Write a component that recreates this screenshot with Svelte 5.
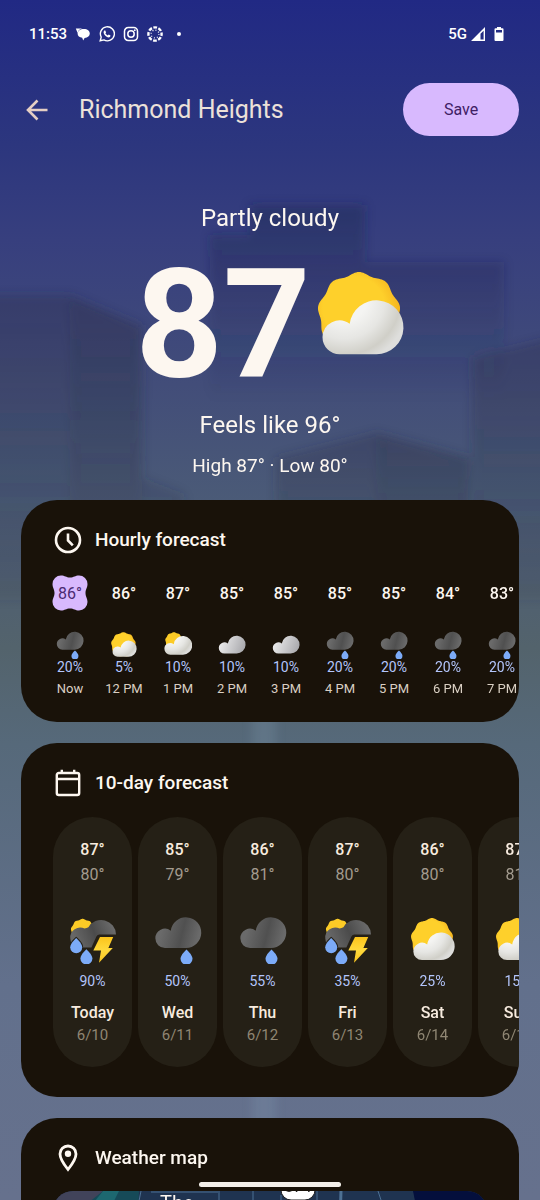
<script lang="ts">
  type Hour = { temp: number; icon: string; rain: number; label: string };
  type Day = { high: number; low: number; icon: string; rain: number; name: string; date: string };

  const hours: Hour[] = [
    { temp: 86, icon: 'rain', rain: 20, label: 'Now' },
    { temp: 86, icon: 'partly', rain: 5, label: '12 PM' },
    { temp: 87, icon: 'mostly', rain: 10, label: '1 PM' },
    { temp: 85, icon: 'cloudy', rain: 10, label: '2 PM' },
    { temp: 85, icon: 'cloudy', rain: 10, label: '3 PM' },
    { temp: 85, icon: 'rain', rain: 20, label: '4 PM' },
    { temp: 85, icon: 'rain', rain: 20, label: '5 PM' },
    { temp: 84, icon: 'rain', rain: 20, label: '6 PM' },
    { temp: 83, icon: 'rain', rain: 20, label: '7 PM' }
  ];

  const days: Day[] = [
    { high: 87, low: 80, icon: 'storm', rain: 90, name: 'Today', date: '6/10' },
    { high: 85, low: 79, icon: 'rain', rain: 50, name: 'Wed', date: '6/11' },
    { high: 86, low: 81, icon: 'rain', rain: 55, name: 'Thu', date: '6/12' },
    { high: 87, low: 80, icon: 'storm', rain: 35, name: 'Fri', date: '6/13' },
    { high: 86, low: 80, icon: 'partly', rain: 25, name: 'Sat', date: '6/14' },
    { high: 87, low: 81, icon: 'partly', rain: 15, name: 'Sun', date: '6/15' }
  ];

  // Scalloped sun outline with nine lobes, one pointing up
  function sunPath(cx: number, cy: number, r: number): string {
    const points: string[] = [];
    for (let i = 0; i < 180; i++) {
      const a = (i / 180) * Math.PI * 2;
      const d = r * (0.965 + 0.035 * Math.cos(9 * a));
      points.push(`${(cx + d * Math.sin(a)).toFixed(2)} ${(cy - d * Math.cos(a)).toFixed(2)}`);
    }
    return `M${points.join('L')}Z`;
  }

  const cloud = 'M21.5 82.3H58.5A27 27 0 1 0 31.7 51.75A17 17 0 0 0 4.5 65.3A17 17 0 0 0 21.5 82.3Z';
  const drop = 'M0 -8C0 -8 -6 -2.6 -6 1.2A6 6 0 0 0 6 1.2C6 -2.6 0 -8 0 -8Z';
</script>

{#snippet weatherIcon(type: string)}
  {#if type === 'partly'}
    <svg class="weather-icon" viewBox="-4 -4 94 94" aria-hidden="true">
      <path d={sunPath(41, 41.5, 41.5)} fill="url(#sun)" />
      <path d={cloud} fill="url(#white-cloud)" />
    </svg>
  {:else if type === 'mostly'}
    <svg class="weather-icon" viewBox="0 0 48 48" aria-hidden="true">
      <path d={sunPath(17, 17, 15)} fill="#fccb26" />
      <path d={cloud} fill="url(#white-cloud)" transform="translate(-2 -8) scale(.59)" />
    </svg>
  {:else if type === 'cloudy'}
    <svg class="weather-icon" viewBox="0 0 48 48" aria-hidden="true">
      <path d={cloud} fill="url(#grey-cloud)" transform="translate(-1.2 -8) scale(.567)" />
    </svg>
  {:else if type === 'rain'}
    <svg class="weather-icon" viewBox="0 0 48 48" aria-hidden="true">
      <path d={cloud} fill="url(#dark-cloud)" transform="translate(-1.2 -14.7) scale(.567)" />
      <path d={drop} fill="#7cabf8" transform="translate(32.5 41.6)" />
    </svg>
  {:else}
    <svg class="weather-icon" viewBox="0 0 48 48" aria-hidden="true">
      <path d={sunPath(13.6, 14.6, 11.8)} fill="#fccb26" />
      <path
        d="M47 18.4A14.8 14.8 0 0 0 19.4 11.3Q17.6 12.2 15.6 12.6A10 10 0 0 0 1.3 22.4Q1.6 31.6 10.5 31.6H22.4L27.4 20.4Q28.4 18.4 30.4 18.4Z"
        fill="url(#storm-cloud)"
      />
      <g fill="#7cabf8" stroke="#252016" stroke-width="2" paint-order="stroke">
        <path d={drop} transform="translate(7.2 30)" />
        <path d={drop} transform="translate(17.4 41.2)" />
      </g>
      <path d="M31 21H44.2L39.4 32H43.8L30 46.8L32 34.6H24.3Z" fill="url(#bolt)" />
    </svg>
  {/if}
{/snippet}

<svg class="shared-defs" aria-hidden="true">
  <defs>
    <radialGradient id="sun" gradientUnits="userSpaceOnUse" cx="36" cy="36" r="52">
      <stop offset=".6" stop-color="#fed02b" />
      <stop offset="1" stop-color="#f1a91b" />
    </radialGradient>
    <radialGradient id="white-cloud" gradientUnits="userSpaceOnUse" cx="26" cy="26" r="66">
      <stop offset=".35" stop-color="#f4f4f2" />
      <stop offset=".62" stop-color="#e6e6e3" />
      <stop offset=".86" stop-color="#d0cfc8" />
      <stop offset="1" stop-color="#dededc" />
    </radialGradient>
    <linearGradient id="grey-cloud" gradientUnits="userSpaceOnUse" x1="10" y1="50" x2="80" y2="76">
      <stop offset="0" stop-color="#e9e9ea" />
      <stop offset="1" stop-color="#a8a8ac" />
    </linearGradient>
    <linearGradient id="dark-cloud" gradientUnits="userSpaceOnUse" x1="16" y1="50" x2="80" y2="66">
      <stop offset="0" stop-color="#6a6a6a" />
      <stop offset=".55" stop-color="#505050" />
      <stop offset="1" stop-color="#6a6a6a" />
    </linearGradient>
    <linearGradient id="storm-cloud" gradientUnits="userSpaceOnUse" x1="6" y1="24" x2="44" y2="8">
      <stop offset="0" stop-color="#686868" />
      <stop offset=".5" stop-color="#4b4b4b" />
      <stop offset="1" stop-color="#6c6c6c" />
    </linearGradient>
    <linearGradient id="bolt" x1="0" y1="0" x2="0" y2="1">
      <stop offset="0" stop-color="#fbc41c" />
      <stop offset=".5" stop-color="#ffd93c" />
      <stop offset="1" stop-color="#fbc61e" />
    </linearGradient>
  </defs>
</svg>

<div class="screen">
  <svg class="skyline" viewBox="0 0 540 1200" preserveAspectRatio="none" aria-hidden="true">
    <defs>
      <filter id="soft" x="-20%" y="-20%" width="140%" height="140%">
        <feGaussianBlur stdDeviation="5" />
      </filter>
      <linearGradient id="fade" x1="0" y1="0" x2="0" y2="1">
        <stop offset="0" stop-color="#20264e" stop-opacity=".4" />
        <stop offset="1" stop-color="#20264e" stop-opacity="0" />
      </linearGradient>
      <linearGradient id="haze" x1="0" y1="0" x2="0" y2="1">
        <stop offset="0" stop-color="#2c3048" stop-opacity=".32" />
        <stop offset="1" stop-color="#2c3440" stop-opacity=".1" />
      </linearGradient>
    </defs>
    <g filter="url(#soft)">
      <path d="M210 235H250V205H365V262H504V400H210Z" fill="url(#fade)" />
      <path d="M-20 295H70L142 326V478L184 494V600H-20Z" fill="url(#haze)" />
      <path d="M70 298L142 326V600H70Z" fill="url(#haze)" opacity=".6" />
      <path d="M276 458L376 433L470 458V600H276Z" fill="url(#haze)" />
      <path d="M376 433L470 458V600H376Z" fill="url(#haze)" opacity=".5" />
      <path d="M472 358L560 336V600H472Z" fill="url(#haze)" />
      <path d="M252 690H276V1200H252Z" fill="#8ea3bf" opacity=".2" />
    </g>
  </svg>

  <div class="status-bar">
    <div class="status-left">
      <time>11:53</time>
      <svg viewBox="0 0 16 16" fill="currentColor" aria-hidden="true">
        <path d="M.8 2.400H9C5 2.400 3 4.500 2.600 7z" />
        <path d="M8.800 3c3.700 0 6 2 6 4.600 0 2.500-2 4.300-5.200 4.500L8.200 14.600l-1-2.800C4.500 11.300 2.600 9.800 2.600 7.400 2.600 4.900 5.300 3 8.800 3z" />
      </svg>
      <svg viewBox="0 0 16 16" fill="none" stroke="currentColor" stroke-width="1.4" aria-hidden="true">
        <path d="M1.200 14.800l1-3.700A7 7 0 1 1 4.900 13.900z" />
        <path d="M5.300 4.500h1l.8 1.900-.7.900c.6 1.100 1.300 1.700 2.400 2.200l.9-.9 1.800.9c0 1.300-.9 1.900-2 1.900C7.200 11.200 4.600 8.400 4.600 6.200c0-.8.3-1.400.7-1.700z" fill="currentColor" stroke="none" />
      </svg>
      <svg viewBox="0 0 16 16" fill="none" stroke="currentColor" stroke-width="1.5" aria-hidden="true">
        <rect x="1.500" y="1.500" width="13" height="13" rx="3.800" />
        <circle cx="8" cy="8" r="3.200" />
        <circle cx="11.800" cy="4.200" r=".9" fill="currentColor" stroke="none" />
      </svg>
      <svg viewBox="0 0 16 16" fill="none" stroke="currentColor" aria-hidden="true">
        <circle cx="8" cy="8" r="6.600" stroke-width="2.400" stroke-dasharray="3.700 1.483" stroke-dashoffset="1.850" />
        <circle cx="8" cy="8" r="3.900" stroke-width="1.200" stroke-dasharray="1 2.063" />
      </svg>
      <span class="more-dot"></span>
    </div>
    <div class="status-right">
      <span>5G</span>
      <svg class="signal" viewBox="0 0 16 16" fill="currentColor" aria-hidden="true">
        <path fill-rule="evenodd" d="M15 1V15H1zM10.500 7.800V13.600H13.600V4.700z" />
      </svg>
      <svg class="battery" viewBox="0 0 10 16" fill="currentColor" aria-hidden="true">
        <path fill-rule="evenodd" d="M3 1H7V2.200H8.500Q9.500 2.200 9.500 3.200V14Q9.500 15 8.500 15H1.500Q.5 15 .5 14V3.200Q.5 2.200 1.500 2.200H3zM2 4V6.400H8V4z" />
      </svg>
    </div>
  </div>

  <header class="top-bar">
    <button class="back" aria-label="Back">
      <svg viewBox="0 0 24 24" fill="none" stroke="currentColor" stroke-width="2.6" aria-hidden="true">
        <path d="M22.500 12H3M12.500 2.500L3 12L12.500 21.500" />
      </svg>
    </button>
    <h1>Richmond Heights</h1>
    <button class="save">Save</button>
  </header>

  <section class="current">
    <p class="condition">Partly cloudy</p>
    <div class="temp-row">
      <span class="temp">87</span>
      <div class="current-icon">{@render weatherIcon('partly')}</div>
    </div>
    <p class="feels">Feels like 96°</p>
    <p class="range">High 87° · Low 80°</p>
  </section>

  <main>
    <section class="card">
      <div class="card-header">
        <svg viewBox="0 0 28 28" fill="none" stroke="currentColor" stroke-width="2.6" aria-hidden="true">
          <circle cx="14" cy="14" r="12" />
          <path d="M14 7.500V14.500L18.800 19.300" />
        </svg>
        <h2>Hourly forecast</h2>
      </div>
      <div class="hours">
        {#each hours as hour, i}
          <div class="hour">
            <div class="hour-temp" class:now={i === 0}>
              {#if i === 0}
                <svg viewBox="0 0 36 36" aria-hidden="true">
                  <path d="M9 .5c4 0 5 2 9 2s5-2 9-2a8.500 8.500 0 0 1 8.500 8.500c0 4-2 5-2 9s2 5 2 9a8.500 8.500 0 0 1-8.500 8.500c-4 0-5-2-9-2s-5 2-9 2A8.500 8.500 0 0 1 .5 27c0-4 2-5 2-9s-2-5-2-9A8.500 8.500 0 0 1 9 .5z" fill="#d8b9fe" />
                </svg>
              {/if}
              <span>{hour.temp}°</span>
            </div>
            {@render weatherIcon(hour.icon)}
            <span class="rain">{hour.rain}%</span>
            <span class="hour-label">{hour.label}</span>
          </div>
        {/each}
      </div>
    </section>

    <section class="card">
      <div class="card-header">
        <svg viewBox="0 0 28 28" fill="none" stroke="currentColor" stroke-width="2.4" aria-hidden="true">
          <rect x="2.800" y="4" width="22.400" height="22" rx="2" />
          <path d="M3 10H25M7.800 .8V4.500M20.200 .8V4.500" />
        </svg>
        <h2>10-day forecast</h2>
      </div>
      <div class="days">
        {#each days as day}
          <div class="day">
            <span class="high">{day.high}°</span>
            <span class="low">{day.low}°</span>
            {@render weatherIcon(day.icon)}
            <span class="rain">{day.rain}%</span>
            <span class="day-name">{day.name}</span>
            <span class="date">{day.date}</span>
          </div>
        {/each}
      </div>
    </section>

    <section class="card">
      <div class="card-header">
        <svg viewBox="0 0 28 28" fill="none" stroke="currentColor" stroke-width="2.8" aria-hidden="true">
          <path d="M14 25.500C10 20.500 6 15.500 6 10A8 8 0 0 1 22 10C22 15.500 18 20.500 14 25.500Z" />
          <circle cx="14" cy="9.800" r="3.200" fill="currentColor" stroke="none" />
        </svg>
        <h2>Weather map</h2>
      </div>
      <div class="map">
        <svg viewBox="0 0 436 200" preserveAspectRatio="xMinYMin slice" aria-hidden="true">
          <rect width="436" height="200" fill="#1f3350" />
          <path d="M0 0H50L34 20H0Z" fill="#41435a" />
          <path d="M50 0H86L78 200H0V40Z" fill="#164a58" />
          <path d="M50 0H66L56 20H34Z" fill="#1d6870" />
          <path d="M360 0H436V200H400Z" fill="#040f3c" />
          <g fill="none" stroke="#4d7093">
            <path d="M88 0L80 40M98 1H165M166 0V60M200 0V60M228 4V60M264 0V60M325 0L345 60" />
            <path d="M288 0L286 60" stroke-width="3" />
          </g>
          <rect x="228" y="-14" width="34" height="23" rx="10" fill="#fff" stroke="#222" />
        </svg>
        <span class="route">874</span>
        <span class="place">The</span>
      </div>
    </section>
  </main>

  <div class="home-indicator"></div>
</div>

<style>
  :global(body) {
    margin: 0;
    background-color: #232a84;
  }

  .screen {
    position: relative;
    height: 100vh;
    overflow: hidden;
    background: linear-gradient(#212984 0%, #2c367e 12%, #373f7e 20%, #424d79 32%, #4b5b77 42%, #53636c 54%, #56697a 62%, #62708c 82%, #66718d 100%);
    color: #fdf7f0;
    font-family: Roboto, 'Noto Sans', sans-serif;
  }

  h1,
  h2,
  p {
    margin: 0;
    font-weight: 400;
  }

  button {
    border: 0;
    padding: 0;
    background: none;
    color: inherit;
    font: inherit;
    cursor: pointer;
  }

  svg {
    display: block;
  }

  .shared-defs {
    position: absolute;
    width: 0;
    height: 0;
  }

  .skyline {
    position: absolute;
    inset: 0;
    width: 100%;
    height: 100%;
  }

  .status-bar,
  .top-bar,
  .current,
  main {
    position: relative;
  }

  .status-bar {
    display: flex;
    justify-content: space-between;
    align-items: center;
    height: 68px;
    padding: 0 36px 0 29px;
    font-size: 15px;
    font-weight: 500;
    color: #fff;
  }

  .status-left,
  .status-right {
    display: flex;
    align-items: center;
  }

  .status-left {
    gap: 8px;
  }

  .status-left svg {
    width: 16px;
    height: 16px;
  }

  .more-dot {
    width: 4px;
    height: 4px;
    margin-left: 6px;
    border-radius: 50%;
    background-color: #fff;
  }

  .signal {
    width: 16px;
    height: 16px;
    margin: 0 8px 0 3px;
  }

  .battery {
    width: 10px;
    height: 16px;
  }

  .top-bar {
    display: flex;
    align-items: center;
    margin-top: 15px;
    padding: 0 21px 0 25px;
  }

  .back {
    width: 24px;
    height: 24px;
    color: #e5cfc4;
  }

  .top-bar h1 {
    flex: 1;
    margin-left: 30px;
    font-size: 25px;
    line-height: 32px;
    color: #ece1d9;
  }

  .save {
    width: 116px;
    height: 53px;
    border-radius: 27px;
    background-color: #d8b9fe;
    color: #3f2065;
    font-size: 16px;
  }

  .current {
    display: flex;
    flex-direction: column;
    align-items: center;
    margin-top: 66px;
    line-height: 32px;
  }

  .condition,
  .feels {
    font-size: 24px;
  }

  .temp-row {
    display: flex;
    align-items: center;
    gap: 3px;
    height: 175px;
    margin-left: 3px;
  }

  .temp {
    padding-top: 6px;
    font-size: 153px;
    font-weight: 700;
    line-height: 174px;
  }

  .current-icon {
    width: 94px;
    height: 94px;
    margin-bottom: 14px;
  }

  .current-icon .weather-icon {
    width: 100%;
    height: 100%;
  }

  .range {
    margin-top: 11px;
    font-size: 19px;
    line-height: 28px;
  }

  main {
    display: flex;
    flex-direction: column;
    gap: 21px;
    margin-top: 20px;
    padding: 0 21px;
  }

  .card {
    overflow: hidden;
    padding-top: 26px;
    border-radius: 36px;
    background-color: #191209;
  }

  .card-header {
    display: flex;
    align-items: center;
    gap: 13px;
    padding-left: 33px;
  }

  .card-header svg {
    width: 28px;
    height: 28px;
  }

  .card-header h2 {
    font-size: 19px;
    font-weight: 500;
    line-height: 28px;
  }

  .hours {
    display: flex;
    padding: 21px 0 22px 22px;
  }

  .hour {
    display: flex;
    flex: none;
    flex-direction: column;
    align-items: center;
    width: 54px;
  }

  .hour-temp {
    display: grid;
    place-items: center;
    width: 36px;
    height: 36px;
    margin-bottom: 20px;
    font-size: 16px;
    font-weight: 500;
  }

  .hour-temp svg,
  .hour-temp span {
    grid-area: 1 / 1;
  }

  .hour-temp svg {
    width: 36px;
    height: 36px;
  }

  .hour-temp.now {
    color: #4a2a72;
    font-weight: 400;
  }

  .hour .weather-icon {
    width: 28px;
    height: 28px;
  }

  .rain {
    color: #b3c5fb;
    font-size: 14px;
    line-height: 16px;
  }

  .hour-label {
    margin-top: 3px;
    font-size: 13px;
    line-height: 22px;
    color: #d9cfc3;
  }

  .days {
    display: flex;
    gap: 6px;
    padding: 20px 0 30px 32px;
  }

  .day {
    display: flex;
    flex: none;
    flex-direction: column;
    align-items: center;
    box-sizing: border-box;
    width: 79px;
    padding: 20px 0;
    border-radius: 40px;
    background-color: #252016;
    font-size: 16px;
    line-height: 23px;
  }

  .high,
  .low {
    line-height: 25px;
  }

  .high,
  .day-name {
    font-weight: 500;
    color: #f7ebdf;
  }

  .low {
    color: #a39b8f;
  }

  .day .weather-icon {
    width: 48px;
    height: 48px;
    margin: 29px 0 9px;
  }

  .day-name {
    margin-top: 12px;
  }

  .date {
    font-size: 15px;
    color: #8f8673;
  }

  .map {
    position: relative;
    height: 200px;
    margin: 19px 32px 32px;
    border-radius: 20px;
    overflow: hidden;
  }

  .map svg {
    width: 100%;
    height: 100%;
  }

  .place {
    position: absolute;
    top: 0;
    left: 107px;
    font-size: 20px;
    line-height: 24px;
  }

  .route {
    position: absolute;
    top: -14px;
    left: 230px;
    width: 30px;
    color: #222;
    font-size: 16px;
    line-height: 20px;
    text-align: center;
  }

  .home-indicator {
    position: absolute;
    bottom: 13px;
    left: 50%;
    width: 142px;
    height: 5px;
    margin-left: -71px;
    border-radius: 3px;
    background-color: #f3efea;
  }
</style>
